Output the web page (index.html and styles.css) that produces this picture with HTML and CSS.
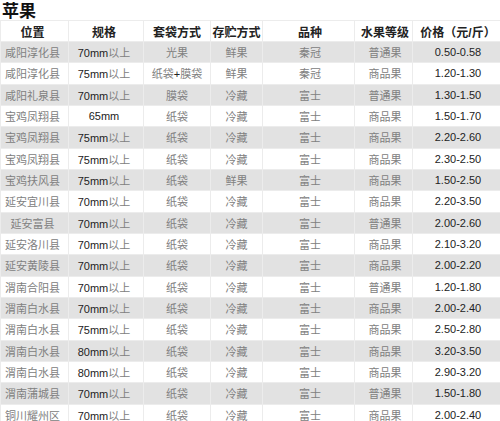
FILE: index.html
```html
<!DOCTYPE html>
<html lang="zh-CN">
<head>
<meta charset="utf-8">
<title>苹果</title>
<link rel="stylesheet" href="styles.css">
</head>
<body>
<h1 class="title">苹果</h1>
<table class="prices">
  <colgroup>
    <col class="c1"><col class="c2"><col class="c3"><col class="c4"><col class="c5"><col class="c6"><col class="c7">
  </colgroup>
  <thead>
    <tr><th class="l">位置</th><th class="l">规格</th><th>套袋方式</th><th>存贮方式</th><th class="r">品种</th><th class="r">水果等级</th><th class="r">价格（元/斤）</th></tr>
  </thead>
  <tbody>
    <tr><td class="l">咸阳淳化县</td><td class="l"><span class="n">70mm</span>以上</td><td>光果</td><td>鲜果</td><td class="r">秦冠</td><td class="r">普通果</td><td class="r n">0.50-0.58</td></tr>
    <tr><td class="l">咸阳淳化县</td><td class="l"><span class="n">75mm</span>以上</td><td>纸袋<span class="n">+</span>膜袋</td><td>鲜果</td><td class="r">秦冠</td><td class="r">商品果</td><td class="r n">1.20-1.30</td></tr>
    <tr><td class="l">咸阳礼泉县</td><td class="l"><span class="n">70mm</span>以上</td><td>膜袋</td><td>冷藏</td><td class="r">富士</td><td class="r">普通果</td><td class="r n">1.30-1.50</td></tr>
    <tr><td class="l">宝鸡凤翔县</td><td class="l"><span class="n">65mm</span></td><td>纸袋</td><td>冷藏</td><td class="r">富士</td><td class="r">商品果</td><td class="r n">1.50-1.70</td></tr>
    <tr><td class="l">宝鸡凤翔县</td><td class="l"><span class="n">75mm</span>以上</td><td>纸袋</td><td>冷藏</td><td class="r">富士</td><td class="r">商品果</td><td class="r n">2.20-2.60</td></tr>
    <tr><td class="l">宝鸡凤翔县</td><td class="l"><span class="n">75mm</span>以上</td><td>纸袋</td><td>冷藏</td><td class="r">富士</td><td class="r">商品果</td><td class="r n">2.30-2.50</td></tr>
    <tr><td class="l">宝鸡扶风县</td><td class="l"><span class="n">75mm</span>以上</td><td>纸袋</td><td>鲜果</td><td class="r">富士</td><td class="r">商品果</td><td class="r n">1.50-2.50</td></tr>
    <tr><td class="l">延安宜川县</td><td class="l"><span class="n">70mm</span>以上</td><td>纸袋</td><td>冷藏</td><td class="r">富士</td><td class="r">商品果</td><td class="r n">2.20-3.50</td></tr>
    <tr><td class="l">延安富县</td><td class="l"><span class="n">70mm</span>以上</td><td>纸袋</td><td>冷藏</td><td class="r">富士</td><td class="r">普通果</td><td class="r n">2.00-2.60</td></tr>
    <tr><td class="l">延安洛川县</td><td class="l"><span class="n">70mm</span>以上</td><td>纸袋</td><td>冷藏</td><td class="r">富士</td><td class="r">商品果</td><td class="r n">2.10-3.20</td></tr>
    <tr><td class="l">延安黄陵县</td><td class="l"><span class="n">70mm</span>以上</td><td>纸袋</td><td>冷藏</td><td class="r">富士</td><td class="r">商品果</td><td class="r n">2.00-2.20</td></tr>
    <tr><td class="l">渭南合阳县</td><td class="l"><span class="n">70mm</span>以上</td><td>纸袋</td><td>冷藏</td><td class="r">富士</td><td class="r">普通果</td><td class="r n">1.20-1.80</td></tr>
    <tr><td class="l">渭南白水县</td><td class="l"><span class="n">70mm</span>以上</td><td>纸袋</td><td>冷藏</td><td class="r">富士</td><td class="r">商品果</td><td class="r n">2.00-2.40</td></tr>
    <tr><td class="l">渭南白水县</td><td class="l"><span class="n">75mm</span>以上</td><td>纸袋</td><td>冷藏</td><td class="r">富士</td><td class="r">商品果</td><td class="r n">2.50-2.80</td></tr>
    <tr><td class="l">渭南白水县</td><td class="l"><span class="n">80mm</span>以上</td><td>纸袋</td><td>冷藏</td><td class="r">富士</td><td class="r">商品果</td><td class="r n">3.20-3.50</td></tr>
    <tr><td class="l">渭南白水县</td><td class="l"><span class="n">80mm</span>以上</td><td>纸袋</td><td>冷藏</td><td class="r">富士</td><td class="r">商品果</td><td class="r n">2.90-3.20</td></tr>
    <tr><td class="l">渭南蒲城县</td><td class="l"><span class="n">70mm</span>以上</td><td>纸袋</td><td>冷藏</td><td class="r">富士</td><td class="r">普通果</td><td class="r n">1.50-1.80</td></tr>
    <tr><td class="l">铜川耀州区</td><td class="l"><span class="n">70mm</span>以上</td><td>纸袋</td><td>冷藏</td><td class="r">富士</td><td class="r">商品果</td><td class="r n">2.00-2.40</td></tr>
  </tbody>
</table>
</body>
</html>
```
FILE: styles.css
```css
html, body {
  margin: 0;
  padding: 0;
  background: #fff;
}

body {
  font-family: "Liberation Sans", "Noto Sans CJK SC", sans-serif;
}

.title {
  margin: 0;
  padding-left: 2px;
  height: 20px;
  font-size: 17px;
  line-height: 20px;
  font-weight: bold;
  color: #111;
  font-family: "Noto Sans CJK SC", sans-serif;
}

.prices {
  width: 500px;
  table-layout: fixed;
  border-collapse: collapse;
}

.c1 { width: 68px; }
.c2 { width: 75px; }
.c3 { width: 67px; }
.c4 { width: 52px; }
.c5 { width: 92px; }
.c6 { width: 58px; }
.c7 { width: 88px; }

.prices th,
.prices td {
  border: 1px solid #ececec;
  padding: 0;
  text-align: center;
  white-space: nowrap;
  overflow: hidden;
}

.prices th {
  height: 20px;
  font-size: 12px;
  font-weight: bold;
  color: #222;
}

.prices td {
  height: 20.33px;
  font-size: 11px;
  color: #808080;
}

.prices tbody tr:nth-child(odd) td {
  background: #e2e2e2;
}

.prices .l { padding-right: 4px; }
.prices .r { padding-left: 3px; }

.n {
  color: #222;
}

.prices td.n {
  color: #222;
}
```
